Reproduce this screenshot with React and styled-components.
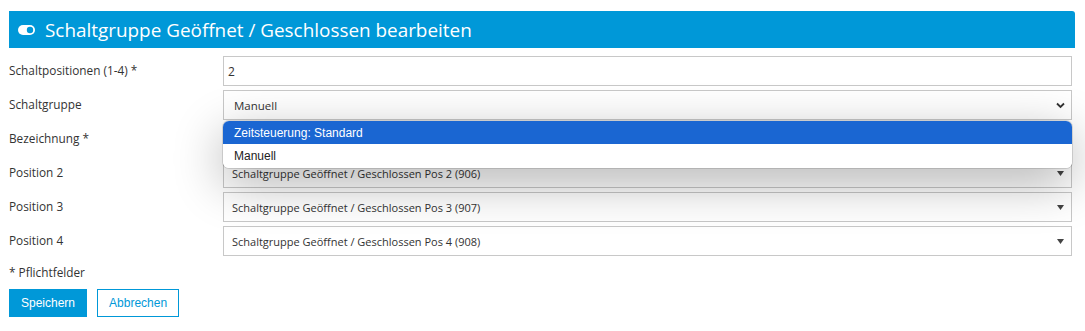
import React from "react";
import styled, { createGlobalStyle } from "styled-components";

const Global = createGlobalStyle`
  html, body { margin: 0; padding: 0; background: #fff; }
  body { font-family: "Open Sans", "Noto Sans", sans-serif; color: #333; }
  * { box-sizing: border-box; }
`;

const Page = styled.div`
  padding: 11px 11px 0 9px;
  width: 1085px;
`;

const Header = styled.div`
  display: flex;
  align-items: center;
  gap: 10px;
  height: 37px;
  background: #0098d8;
  color: #fff;
  padding: 0 0 0 9px;
  border-radius: 0 3px 0 0;
  font-size: 18.9px;
  width: 1066px;
`;

const Form = styled.div`
  display: flex;
  flex-direction: column;
  gap: 5px;
  margin-top: 8px;
  width: 1063px;
`;

const Row = styled.div`
  display: grid;
  grid-template-columns: 214px 1fr;
  align-items: center;
  height: 29px;
  position: relative;
`;

const Label = styled.div`
  font-size: 11.8px;
  color: #333;
  align-self: start;
  padding-top: 6px;
`;

const Field = styled.div`
  height: 30px;
  border: 1px solid #c8c8c8;
  background: #fff;
  display: flex;
  align-items: center;
  justify-content: space-between;
  padding: 0 ${(p) => (p.$caret ? "5px" : "0")} 0 ${(p) => p.$pad || "8px"};
  font-size: ${(p) => p.$size || "11px"};
  color: #333;
`;

const Dropdown = styled.div`
  position: absolute;
  left: 214px;
  right: 0;
  top: 31px;
  z-index: 5;
  background: #fff;
  border-radius: 6px;
  box-shadow: 0 0 0 1px rgba(0, 0, 0, 0.12), 0 14px 50px rgba(0, 0, 0, 0.32);
  overflow: hidden;
  font-family: "Liberation Sans", Arial, sans-serif;
  font-size: 12px;
`;

const Option = styled.div`
  height: ${(p) => p.$h}px;
  display: flex;
  align-items: center;
  padding-left: 11px;
  background: ${(p) => (p.$active ? "#1a66d2" : "#fff")};
  color: ${(p) => (p.$active ? "#fff" : "#222")};
`;

const Note = styled.div`
  font-size: 11.8px;
  margin-top: 9px;
`;

const Buttons = styled.div`
  display: flex;
  gap: 10px;
  margin-top: 9px;
  font-family: "Liberation Sans", Arial, sans-serif;
`;

const Button = styled.button`
  height: 28px;
  padding: 0 11px;
  font-family: inherit;
  font-size: 12px;
  border: 1px solid #0098d8;
  background: ${(p) => (p.$primary ? "#0098d8" : "#fff")};
  color: ${(p) => (p.$primary ? "#fff" : "#0098d8")};
  cursor: pointer;
`;

const Toggle = () => (
  <svg width="17" height="10" viewBox="0 0 17 10">
    <rect x="0" y="0" width="17" height="10" rx="5" fill="#fff" />
    <circle cx="12" cy="5" r="3.2" fill="#0098d8" />
  </svg>
);

const Chevron = () => (
  <svg width="11" height="8" viewBox="0 0 11 8">
    <path d="M2 2.5 L5.5 6 L9 2.5" stroke="#333" strokeWidth="1.8" fill="none" />
  </svg>
);

const Tri = () => (
  <svg width="10" height="5" viewBox="0 0 10 5">
    <path d="M1 0 L8 0 L4.5 5 Z" fill="#444" />
  </svg>
);

export default function App() {
  return (
    <>
      <Global />
      <Page>
        <Header>
          <Toggle />
          <span>Schaltgruppe Geöffnet / Geschlossen bearbeiten</span>
        </Header>
        <Form>
          <Row>
            <Label>Schaltpositionen (1-4) *</Label>
            <Field $pad="4px" $size="12px">2</Field>
          </Row>
          <Row>
            <Label>Schaltgruppe</Label>
            <Field $caret $pad="10px" $size="11.5px">
              <span>Manuell</span>
              <Chevron />
            </Field>
            <Dropdown>
              <Option $active $h={23}>Zeitsteuerung: Standard</Option>
              <Option $h={24}>Manuell</Option>
            </Dropdown>
          </Row>
          <Row>
            <Label>Bezeichnung *</Label>
            <Field />
          </Row>
          {[2, 3, 4].map((n) => (
            <Row key={n}>
              <Label>Position {n}</Label>
              <Field $caret>
                <span>Schaltgruppe Geöffnet / Geschlossen Pos {n} ({904 + n})</span>
                <Tri />
              </Field>
            </Row>
          ))}
        </Form>
        <Note>* Pflichtfelder</Note>
        <Buttons>
          <Button $primary>Speichern</Button>
          <Button>Abbrechen</Button>
        </Buttons>
      </Page>
    </>
  );
}
